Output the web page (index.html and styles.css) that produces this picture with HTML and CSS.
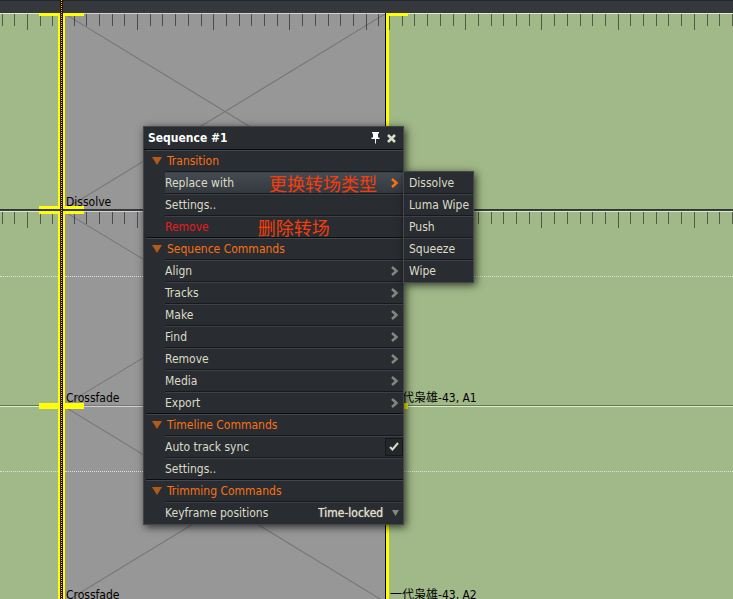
FILE: index.html
```
<!DOCTYPE html>
<html lang="en">
<head>
<meta charset="utf-8">
<title>Sequence timeline</title>
<link rel="stylesheet" href="styles.css">
</head>
<body>
<main class="timeline">
  <header class="timeline-bar"></header>

  <section class="track track--video">
    <div class="clip"><svg class="ruler" data-origin="27"></svg></div>
    <div class="cut cut--start"></div>
    <div class="clip clip--transition">
      <svg class="cross" viewBox="0 0 100 100" preserveAspectRatio="none"><path d="M0 0L100 100M0 100L100 0"/></svg>
      <svg class="ruler" data-origin="72"></svg>
      <span class="clip-label">Dissolve</span>
    </div>
    <div class="cut cut--end"></div>
    <div class="clip"><svg class="ruler" data-origin="0"></svg></div>
  </section>

  <section class="track">
    <div class="clip clip--audio"><svg class="ruler" data-origin="27"></svg></div>
    <div class="cut cut--start"></div>
    <div class="clip clip--transition clip--audio">
      <svg class="cross" viewBox="0 0 100 100" preserveAspectRatio="none"><path d="M0 0L100 100M0 100L100 0"/></svg>
      <svg class="ruler" data-origin="72"></svg>
      <span class="clip-label">Crossfade</span>
    </div>
    <div class="cut cut--end"></div>
    <div class="clip clip--audio"><svg class="ruler" data-origin="0"></svg><span class="clip-label">一代枭雄-43, A1</span></div>
  </section>

  <section class="track track--last">
    <div class="clip clip--audio"></div>
    <div class="cut cut--start"></div>
    <div class="clip clip--transition clip--audio">
      <svg class="cross" viewBox="0 0 100 100" preserveAspectRatio="none"><path d="M0 0L100 100M0 100L100 0"/></svg>
      <span class="clip-label">Crossfade</span>
    </div>
    <div class="cut cut--end"></div>
    <div class="clip clip--audio"><span class="clip-label">一代枭雄-43, A2</span></div>
  </section>

  <div class="playhead"></div>
</main>

<div class="popup">
  <div class="menu">
    <header class="menu-title">
      <h1>Sequence #1</h1>
      <button class="tool" aria-label="Pin"><svg width="9" height="12" viewBox="0 0 9 12"><path d="M1 0h7v1.500H7V5.500h1.500V7H5v4.500H4V7H.5V5.500H2v-4H1z"/></svg></button>
      <button class="tool" aria-label="Close"><svg width="9" height="9" viewBox="0 0 9 9"><path class="stroke" d="M1 1l7 7M8 1l-7 7"/></svg></button>
    </header>

    <section class="group">
      <h2><svg class="disclosure" viewBox="0 0 10 8"><path d="M0 0h10L5 8z"/></svg>Transition</h2>
      <button class="item item--active"><span>Replace with</span><strong class="note note--type" lang="zh">更换转场类型</strong><svg class="chevron" viewBox="0 0 8 10"><path d="M1 1l4.500 4L1 9"/></svg></button>
      <button class="item">Settings..</button>
      <button class="item item--danger"><span>Remove</span><strong class="note note--remove" lang="zh">删除转场</strong></button>
    </section>

    <section class="group">
      <h2><svg class="disclosure" viewBox="0 0 10 8"><path d="M0 0h10L5 8z"/></svg>Sequence Commands</h2>
      <button class="item">Align<svg class="chevron" viewBox="0 0 8 10"><path d="M1 1l4.500 4L1 9"/></svg></button>
      <button class="item">Tracks<svg class="chevron" viewBox="0 0 8 10"><path d="M1 1l4.500 4L1 9"/></svg></button>
      <button class="item">Make<svg class="chevron" viewBox="0 0 8 10"><path d="M1 1l4.500 4L1 9"/></svg></button>
      <button class="item">Find<svg class="chevron" viewBox="0 0 8 10"><path d="M1 1l4.500 4L1 9"/></svg></button>
      <button class="item">Remove<svg class="chevron" viewBox="0 0 8 10"><path d="M1 1l4.500 4L1 9"/></svg></button>
      <button class="item">Media<svg class="chevron" viewBox="0 0 8 10"><path d="M1 1l4.500 4L1 9"/></svg></button>
      <button class="item">Export<svg class="chevron" viewBox="0 0 8 10"><path d="M1 1l4.500 4L1 9"/></svg></button>
    </section>

    <section class="group">
      <h2><svg class="disclosure" viewBox="0 0 10 8"><path d="M0 0h10L5 8z"/></svg>Timeline Commands</h2>
      <label class="item item--check">Auto track sync
        <span class="check"><input type="checkbox" checked><svg width="10" height="9" viewBox="0 0 10 9"><path d="M1 5l2.500 2.500L9 1"/></svg></span>
      </label>
      <button class="item">Settings..</button>
    </section>

    <section class="group">
      <h2><svg class="disclosure" viewBox="0 0 10 8"><path d="M0 0h10L5 8z"/></svg>Trimming Commands</h2>
      <div class="item item--select">
        <label for="keyframes">Keyframe positions</label>
        <select id="keyframes"><option>Time-locked</option></select>
        <svg class="arrow" viewBox="0 0 7 6"><path d="M0 0h7L3.500 6z"/></svg>
      </div>
    </section>
  </div>

  <div class="menu submenu">
    <button class="item">Dissolve</button>
    <button class="item">Luma Wipe</button>
    <button class="item">Push</button>
    <button class="item">Squeeze</button>
    <button class="item">Wipe</button>
  </div>
</div>
<script src="ruler.js"></script>
</body>
</html>
```
FILE: ruler.js
```
// Draws the frame ticks of each clip; every sixth tick is a long one.
const STEP = 12.7;
document.querySelectorAll('.ruler').forEach((ruler) => {
  const origin = Number(ruler.dataset.origin);
  const width = ruler.getBoundingClientRect().width;
  let path = '';
  for (let n = -Math.floor(origin / STEP); origin + n * STEP < width; n++) {
    const x = Math.round(origin + n * STEP);
    path += `M${x} 0h1v${n % 6 === 0 ? 16 : 12}h-1z`;
  }
  const ticks = document.createElementNS('http://www.w3.org/2000/svg', 'path');
  ticks.setAttribute('d', path);
  ruler.append(ticks);
});
```
FILE: styles.css
```
* { box-sizing: border-box; }

body {
  margin: 0;
  height: 100vh;
  overflow: hidden;
  position: relative;
  background: #a1b888;
  font: 12px/20px "DejaVu Sans Condensed", "Noto Sans CJK SC", sans-serif;
}

/* Timeline */
.timeline { position: relative; }

.timeline-bar {
  height: 13px;
  background: #35393d;
  border-top: 1px solid #22262a;
}

.track {
  display: grid;
  grid-template-columns: 58px 7px 320px 4px 1fr;
  height: 195px;
}

.track--video {
  height: 198px;
  border-bottom: 2px solid #35393d;
}

.track--last { height: 197px; }

.clip {
  position: relative;
  display: flex;
  align-items: flex-end;
  background: #a1b888;
  border-top: 1px solid #dcefc8;
  border-bottom: 1px solid #66784f;
}

.clip--transition {
  background: #979797;
  border-top-color: #d2d2d2;
  border-bottom-color: #777;
}

.track--video .clip { border-bottom: 0; }

.clip--audio::before {
  content: "";
  position: absolute;
  inset: 64px 0 auto;
  border-top: 1px dotted #dde3d6;
}

.clip-label {
  position: relative;
  padding-left: 1px;
  line-height: 14px;
  color: #000;
}

.cross, .ruler {
  position: absolute;
  inset: 0;
  width: 100%;
  height: 100%;
}

.cross path {
  fill: none;
  stroke: #747474;
  stroke-width: 1px;
  vector-effect: non-scaling-stroke;
}

.ruler path { fill: #000; fill-opacity: .5; }

.cut {
  position: relative;
  z-index: 1;
  background: #ff0;
}

.cut--end { border-left: 1px solid #000; }

.cut::before, .cut::after {
  content: "";
  position: absolute;
  left: 0;
  width: 22px;
  height: 3px;
  background: #ff0;
}

.cut--start::before, .cut--start::after { left: -19px; width: 45px; }
.cut::before { top: 0; }
.cut::after { bottom: 0; }

.playhead {
  position: absolute;
  z-index: 2;
  inset: 0 auto 0 60px;
  width: 3px;
  background: repeating-linear-gradient(#f5b040 0 1px, #1c0c00 1px 2px) center / 1px 100% no-repeat #2a1800;
}

/* Context menu */
.popup {
  position: absolute;
  z-index: 3;
  top: 126px;
  left: 143px;
  display: flex;
  align-items: flex-start;
}

.menu {
  width: 261px;
  background: #292c30;
  border: 1px solid #43474c;
  box-shadow: 2px 2px 8px rgba(0, 0, 0, .7);
  color: #dcdcc8;
}

.menu-title {
  display: flex;
  align-items: center;
  gap: 7px;
  height: 23px;
  padding: 0 7px 0 4px;
  border-bottom: 1px solid #0c0d0f;
}

h1, h2 { margin: 0; font-size: 12px; }
h1 { flex: 1; color: #fff; }

.tool {
  display: flex;
  padding: 0;
  border: 0;
  background: none;
}

.tool path { fill: #fff; }
.tool .stroke { fill: none; stroke: #dcdcc8; stroke-width: 2.5; }

.group { padding-left: 2px; }

h2 {
  display: flex;
  align-items: center;
  gap: 5px;
  height: 22px;
  padding: 0 0 2px 6px;
  border-top: 1px solid #43474c;
  font-weight: 400;
  color: #f77216;
}

.group + .group h2 { box-shadow: 0 -1px #0c0d0f; }

.disclosure { width: 10px; height: 8px; fill: #b35a18; }

.item {
  display: flex;
  align-items: center;
  width: calc(100% - 19px);
  height: 22px;
  margin: 0 0 0 19px;
  padding: 0 4px 2px 0;
  border: 0;
  border-top: 1px solid #3d4145;
  box-shadow: 0 -1px #17191c;
  background: none;
  font: inherit;
  color: inherit;
  text-align: left;
}

.item--active { background: linear-gradient(#444b52, #33383d); }
.item--danger { color: #e81c1c; }

.chevron {
  width: 8px;
  height: 10px;
  margin-left: auto;
  fill: none;
  stroke: #85877f;
  stroke-width: 2.5;
}

.item--active .chevron { stroke: #f77216; }

.note {
  font: 400 18px/20px "Noto Sans CJK SC", sans-serif;
  color: #f53d0c;
}

.note--type { margin-left: 35px; }
.note--remove { margin-left: 49px; }

.item--check { justify-content: space-between; padding-right: 0; }

.check {
  position: relative;
  display: grid;
  place-items: center;
  width: 18px;
  height: 18px;
  border: 1px solid #151719;
  background: #23262a;
}

.check input {
  position: absolute;
  inset: 0;
  margin: 0;
  appearance: none;
}

.check path { fill: none; stroke: #dcdcc8; stroke-width: 2; }

.item--select { gap: 8px; }

select {
  margin-left: auto;
  padding: 0;
  border: 0;
  appearance: none;
  background: none;
  font: inherit;
  color: inherit;
  text-shadow: 0 0 1px currentColor;
}

.arrow { width: 7px; height: 6px; fill: #85877f; }

.submenu {
  width: 71px;
  margin: 45px 0 0 -1px;
}

.submenu .item {
  width: 100%;
  margin: 0;
  padding: 0 0 2px 5px;
  white-space: nowrap;
}

.submenu .item:first-child { border-top-color: transparent; box-shadow: none; }
```
